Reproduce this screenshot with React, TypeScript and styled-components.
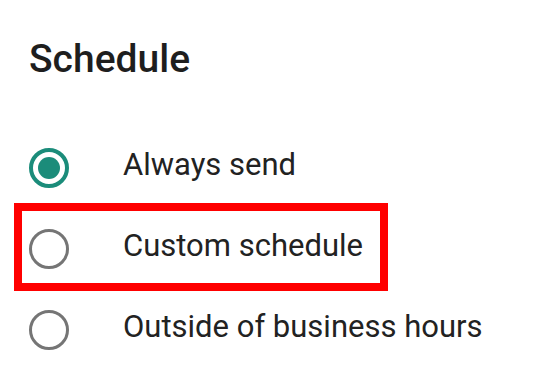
import styled, { createGlobalStyle } from 'styled-components';

const GlobalStyle = createGlobalStyle`
   html, body {
      margin: 0;
      padding: 0;
      background: #ffffff;
   }
   body {
      font-family: Roboto, 'Noto Sans', 'Liberation Sans', sans-serif;
      color: #212121;
   }
`;

const Page = styled.div`
   width: 546px;
   height: 373px;
   box-sizing: border-box;
   padding: 35px 0 0 29px;
   overflow: hidden;
`;

const Title = styled.h1`
   margin: 0 0 44px;
   font-size: 39px;
   font-weight: 500;
   line-height: 48px;
   color: #1e1e1e;
`;

const Options = styled.div`
   display: flex;
   flex-direction: column;
`;

const Row = styled.label`
   position: relative;
   display: flex;
   align-items: center;
   gap: 54px;
   height: 81px;
   cursor: pointer;
`;

const Radio = styled.span<{ $checked?: boolean }>`
   flex: none;
   box-sizing: border-box;
   width: 40px;
   height: 40px;
   border-radius: 50%;
   border: ${(p) => (p.$checked ? '4px solid #1b8c7a' : '3px solid #757575')};
   display: flex;
   align-items: center;
   justify-content: center;

   &::after {
      content: '';
      display: ${(p) => (p.$checked ? 'block' : 'none')};
      width: 22px;
      height: 22px;
      border-radius: 50%;
      background: #1b8c7a;
   }
`;

const Label = styled.span`
   margin-bottom: 6px;
   font-size: 31px;
   line-height: 36px;
   color: #222222;
`;

const Highlight = styled.span`
   position: absolute;
   left: -15px;
   top: -5px;
   width: 374px;
   height: 88px;
   box-sizing: border-box;
   border: 8px solid #ff0000;
   pointer-events: none;
`;

const options = [
   { label: 'Always send', checked: true },
   { label: 'Custom schedule', highlight: true },
   { label: 'Outside of business hours' },
];

const App = () => {
   return (
      <>
         <GlobalStyle />
         <Page>
            <Title>Schedule</Title>
            <Options>
               {options.map((o) => (
                  <Row key={o.label}>
                     <Radio $checked={o.checked} />
                     <Label>{o.label}</Label>
                     {o.highlight && <Highlight />}
                  </Row>
               ))}
            </Options>
         </Page>
      </>
   );
};

export default App;
